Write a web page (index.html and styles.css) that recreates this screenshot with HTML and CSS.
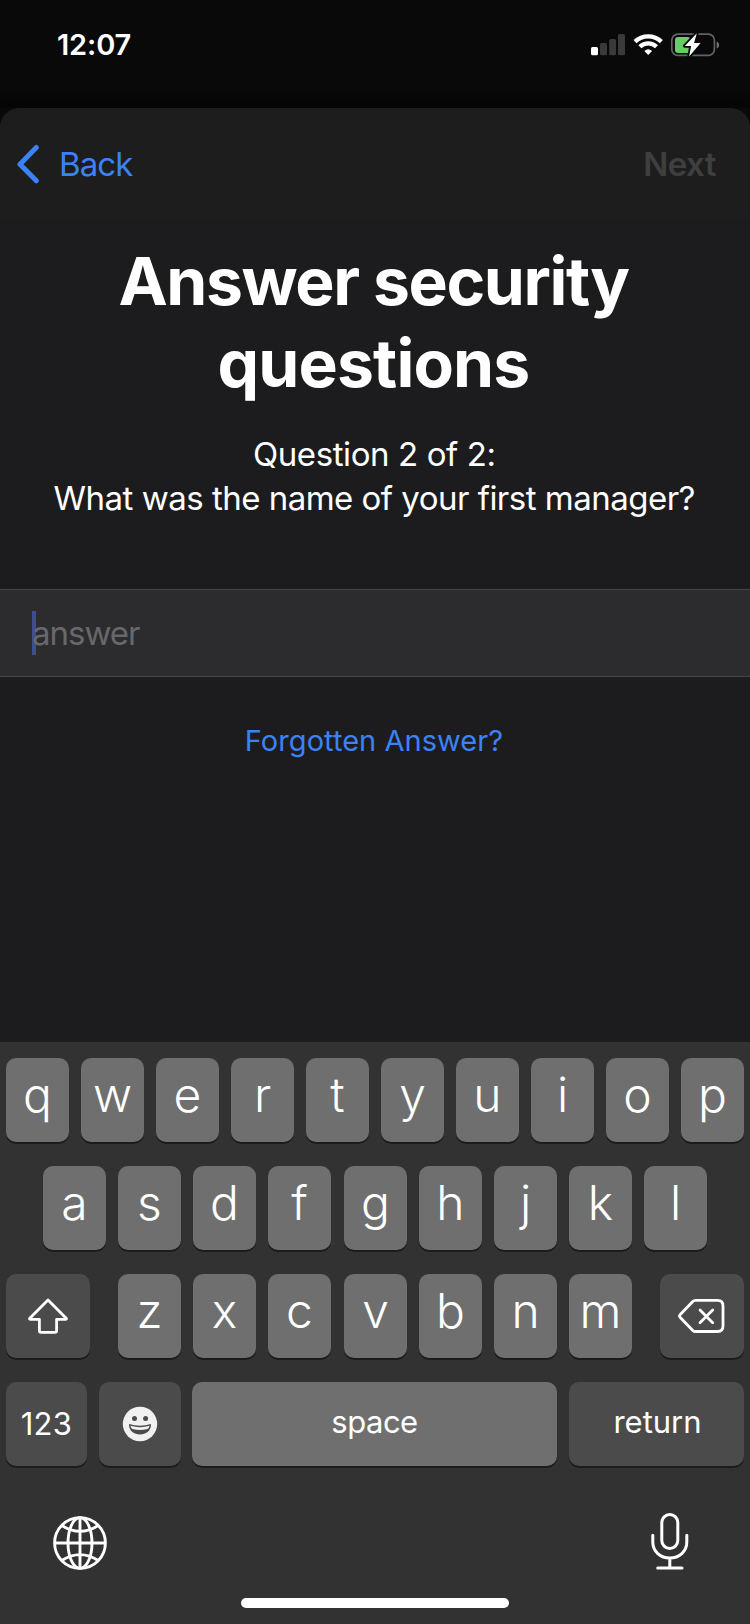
FILE: index.html
```html
<!DOCTYPE html>
<html lang="en">
<head>
<meta charset="utf-8">
<title>Answer security questions</title>
<link rel="stylesheet" href="styles.css">
</head>
<body>
<div class="screen">
  <header class="status">
    <span class="time">12:07</span>
    <svg class="status-icons" width="130" height="24" viewBox="590 33 130 24">
      <rect x="591" y="47" width="7" height="8.3" rx="1.5" fill="#fff"/>
      <g fill="#3a3a3a"><rect x="600" y="43" width="7" height="12.3" rx="1.5"/><rect x="609.2" y="39" width="6.8" height="16.3" rx="1.5"/><rect x="618" y="34" width="7" height="21.3" rx="1.5"/></g>
      <g fill="none" stroke="#fff" stroke-width="4.3"><path d="M635 41.6a19.2 19.2 0 0 1 26.4 0"/><path d="M639.9 46.8a12 12 0 0 1 16.6 0"/></g>
      <path d="M648.2 55.1l-3.9-4.1a5.9 5.9 0 0 1 7.8 0z" fill="#fff"/>
      <rect x="671.8" y="34.2" width="42.6" height="21.2" rx="6" fill="none" stroke="#626262" stroke-width="1.7"/>
      <path d="M716.7 41.5c3.2 1 3.2 6 0 7z" fill="#737373"/>
      <rect x="675" y="37" width="15.5" height="16" rx="3" fill="#65ce66"/>
      <path d="M696.8 33.3l-12 12.6h6.3l-2 10.7 11.5-13.5h-6.5z" fill="#fff" stroke="#090909" stroke-width="3.6" stroke-linejoin="round" paint-order="stroke"/>
    </svg>
  </header>
  <main class="sheet">
    <nav class="nav">
      <a class="back"><svg width="24" height="40" viewBox="0 0 24 40"><path d="M19.300 3.500L3 20.200l16.300 16.600" fill="none" stroke="#3b82f7" stroke-width="5" stroke-linecap="round" stroke-linejoin="round"/></svg><span class="back-label">Back</span></a>
      <span class="next">Next</span>
    </nav>
    <h1 class="title">Answer security<br><span class="title-end">questions</span></h1>
    <p class="question">Question 2 of 2:<br><span class="question-text">What was the name of your first manager?</span></p>
    <div class="field"><span class="placeholder">answer</span></div>
    <a class="forgot">Forgotten Answer?</a>
  </main>
  <section class="keyboard">
    <div class="row"><span class="key">q</span><span class="key">w</span><span class="key">e</span><span class="key">r</span><span class="key">t</span><span class="key">y</span><span class="key">u</span><span class="key">i</span><span class="key">o</span><span class="key">p</span></div>
    <div class="row home"><span class="key">a</span><span class="key">s</span><span class="key">d</span><span class="key">f</span><span class="key mid">g</span><span class="key">h</span><span class="key">j</span><span class="key">k</span><span class="key">l</span></div>
    <div class="row lower">
      <span class="key dark wide"><svg width="42" height="38" viewBox="27 1297 42 38"><path d="M48 1300L29.800 1318.200q-.8 1 .5 1.100H39.400V1330.500q0 1.800 1.800 1.800H54.800q1.800 0 1.800-1.800V1319.300H65.700q1.300-.1.500-1.100z" fill="none" stroke="#fff" stroke-width="2.800" stroke-linejoin="round"/></svg></span>
      <div class="letters"><span class="key">z</span><span class="key">x</span><span class="key">c</span><span class="key mid">v</span><span class="key">b</span><span class="key">n</span><span class="key">m</span></div>
      <span class="key dark wide"><svg width="48" height="36" viewBox="678 1298 48 36"><g fill="none" stroke="#fff" stroke-width="2.800" stroke-linecap="round" stroke-linejoin="round"><path d="M695.500 1300.400H717.500q5.500 0 5.500 5.500V1326q0 5.500-5.500 5.500H695.500q-1.600 0-2.700-1.100L680 1317.200q-1-1.200 0-2.400L692.800 1301.500q1.100-1.100 2.700-1.100z"/><path d="M700 1310l12.700 12.700M712.700 1310L700 1322.700"/></g></svg></span>
    </div>
    <div class="row bottom">
      <span class="key dark num">123</span>
      <span class="key dark emoji"><svg width="36" height="36" viewBox="-18 -18 36 36"><circle r="17.200" fill="#f1f1f1"/><circle cx="-5.500" cy="-5.500" r="2.500" fill="#4b4b4b"/><circle cx="5.600" cy="-5.500" r="2.500" fill="#4b4b4b"/><path d="M-11 0Q0 3.500 11 0C11.500 14-11.500 14-11 0z" fill="#4b4b4b"/><path d="M-9.500 1.800Q0 4.500 9.500 1.800Q9.300 4.300 7.500 5Q0 7-7.500 5Q-9.300 4.300-9.500 1.800z" fill="#f1f1f1"/></svg></span>
      <span class="key text space">space</span>
      <span class="key dark text return">return</span>
    </div>
    <div class="tools">
      <svg class="globe" width="56" height="56" viewBox="-28 -28 56 56"><g fill="none" stroke="#fff" stroke-width="2.900"><circle r="25.400"/><ellipse rx="12" ry="25.400"/><path d="M0-25.400V25.400M-25.400 0H25.400M-18.300-17.500Q0-5.800 18.300-17.500M-18.300 17.500Q0 5.800 18.300 17.500"/></g></svg>
      <svg width="40" height="58" viewBox="0 0 40 58"><g fill="none" stroke="#fff" stroke-width="3" stroke-linecap="round"><rect x="11.800" y="2.500" width="16" height="34" rx="8"/><path d="M2.800 23.300v7c0 9 7.600 15.700 17 15.700s17-6.700 17-15.700v-7M19.800 46v10M7.700 56H32"/></g></svg>
    </div>
    <div class="home-bar"></div>
  </section>
</div>
</body>
</html>
```
FILE: styles.css
```css
* { box-sizing: border-box; }
body { margin: 0; background: #090909; font-family: Inter, "Noto Sans", sans-serif; color: #fff; }
.screen { width: 750px; height: 1624px; display: flex; flex-direction: column; overflow: hidden; }
.status { height: 108px; flex: none; display: flex; justify-content: space-between; padding: 33px 30px 0 57px; background: linear-gradient(#090909 80%, #050505); }
.time { font-size: 29px; line-height: 24px; font-weight: 600; letter-spacing: -.15px; }
.sheet { height: 934px; flex: none; background: #1c1c1e; border-radius: 20px 20px 0 0; display: flex; flex-direction: column; overflow: hidden; }
.nav { height: 110px; flex: none; background: #1d1d1d; display: flex; justify-content: space-between; padding: 36px 34px 0 17px; font-size: 33px; line-height: 40px; }
.back { display: flex; gap: 18px; color: #3b82f7; }
.back-label { letter-spacing: -.9px; }
.next { color: #3f3f3f; font-weight: 600; letter-spacing: -.5px; }
.title { margin: 22px 0 0; padding-right: 3px; font-size: 66px; line-height: 82px; font-weight: 700; text-align: center; letter-spacing: -1.4px; }
.title-end { letter-spacing: -.85px; }
.question { margin: 28px 0 0; padding-right: 1.5px; font-size: 33px; line-height: 44px; text-align: center; letter-spacing: -.4px; }
.question-text { letter-spacing: -.51px; }
.field { margin-top: 69px; height: 88px; flex: none; background: #2c2c2e; border: solid #464649; border-width: 1px 0; padding: 21px 32px; }
.placeholder { display: block; width: 200px; height: 44px; font-size: 33px; line-height: 44px; letter-spacing: -1px; color: #68686c; background: linear-gradient(#3e4e92, #3e4e92) left / 4px 44px no-repeat; }
.forgot { margin-top: 46px; padding-right: 2px; color: #3b82f7; text-align: center; font-size: 29px; line-height: 36px; letter-spacing: .05px; }
.keyboard { flex: 1; background: #323232; padding: 16px 6px 0; display: flex; flex-direction: column; gap: 24px; }
.row { display: flex; gap: 12px; height: 84px; flex: none; }
.home { padding-left: 37px; }
.lower { justify-content: space-between; }
.letters { display: flex; gap: 12px; }
.key { width: 63px; height: 84px; flex: none; border-radius: 10px; background: #6f6f6f; box-shadow: 0 2px 0 #1c1c1c; display: flex; align-items: center; justify-content: center; padding: 0 0 10px; font-size: 48px; line-height: 58px; font-weight: 350; }
.mid { margin-left: 1px; }
.dark { background: #4b4b4b; padding: 0; }
.wide { width: 84px; }
.text, .num { font-size: 31px; font-weight: 400; }
.text { padding: 0 0 4px; }
.num { width: 81px; letter-spacing: .3px; }
.emoji { width: 82px; margin-right: -1px; }
.space { width: 365px; letter-spacing: -.5px; }
.return { width: 175px; padding-left: 2px; }
.tools { display: flex; justify-content: space-between; align-items: flex-start; height: 84px; padding: 22px 54px 0 45.5px; }
.globe { margin-top: 3px; }
.home-bar { width: 268px; height: 10px; border-radius: 5px; background: #fff; align-self: center; }
```
